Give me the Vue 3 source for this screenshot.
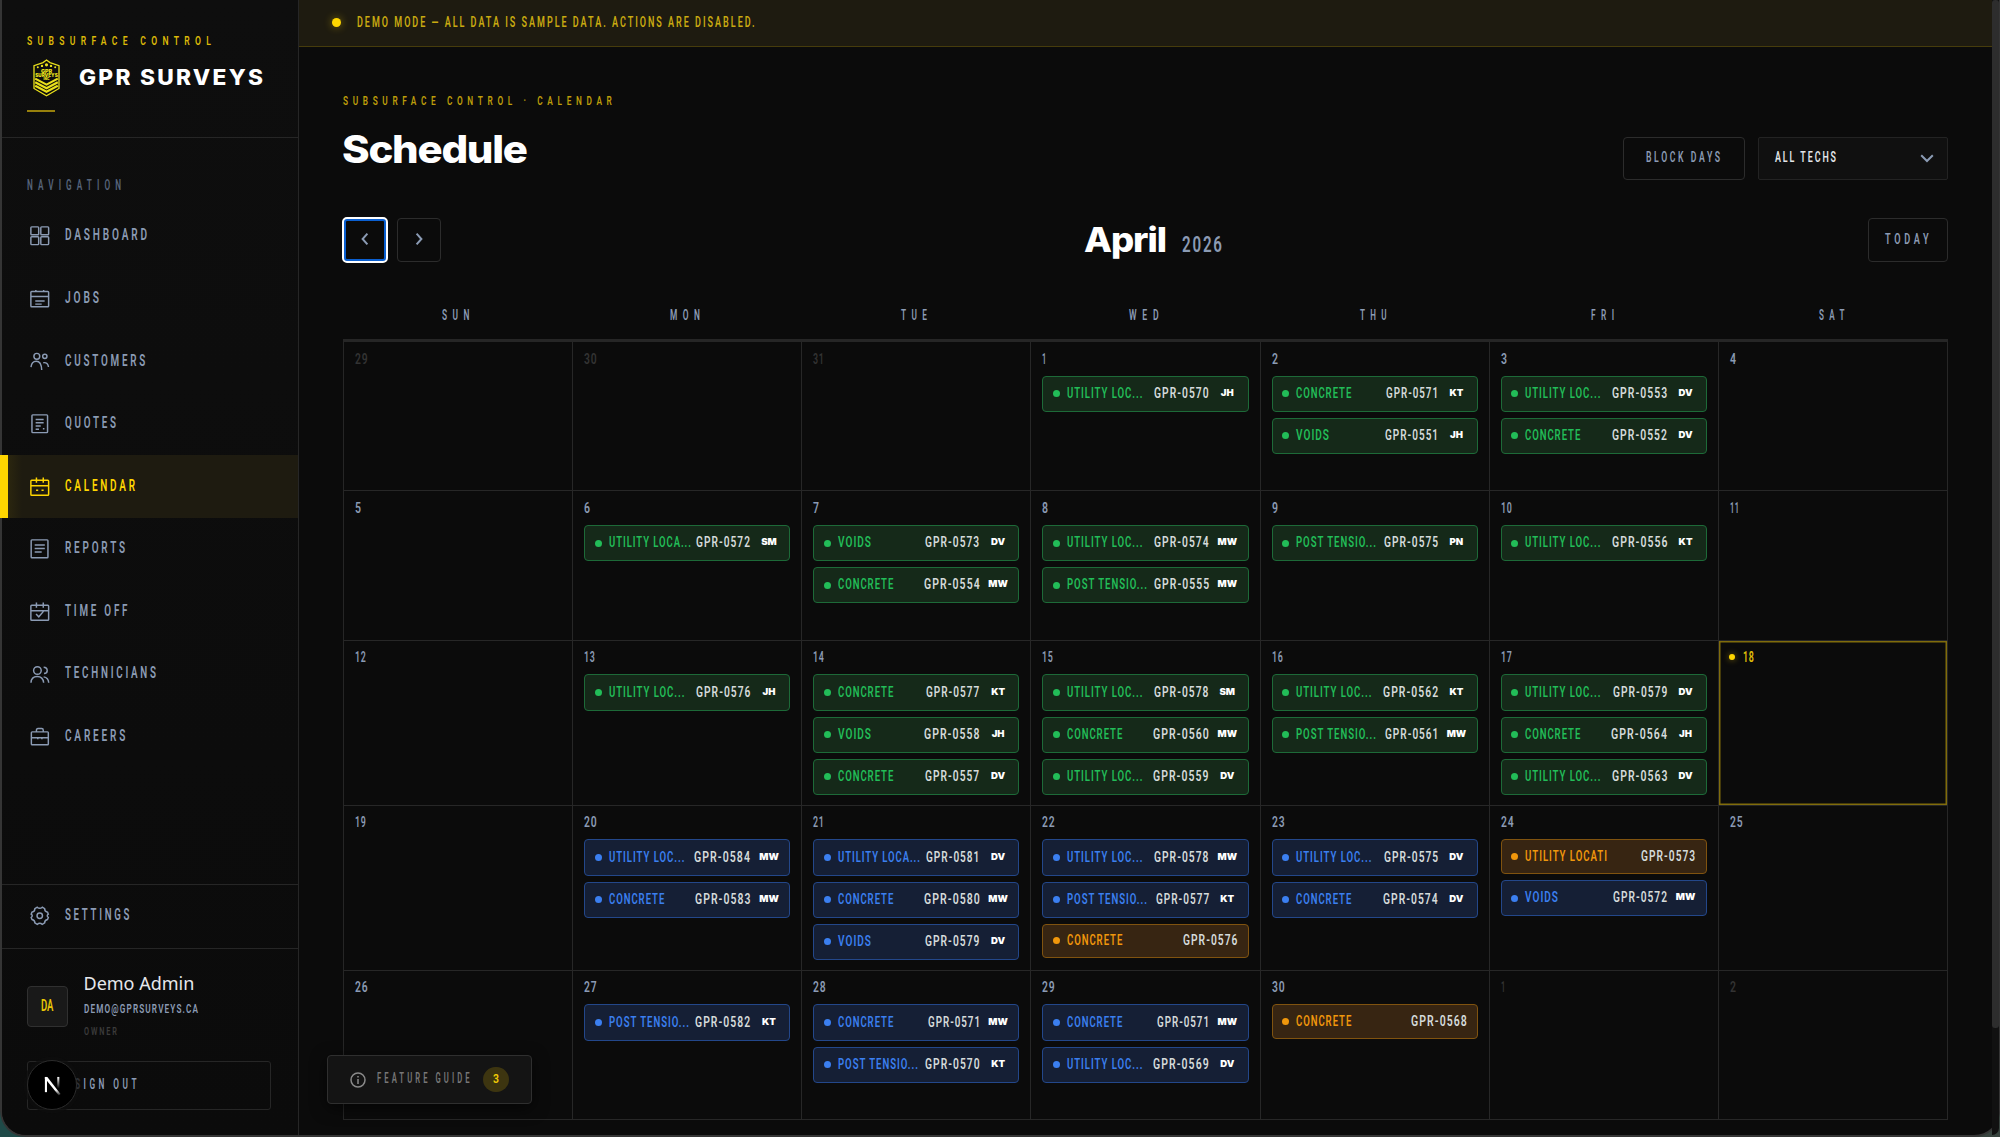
<template>
  <div class="desktop">
    <div class="window">
      <aside class="sidebar">
        <div class="brand">
          <CapText class="brand-over" text="SUBSURFACE CONTROL" :w="184" :cap="9.6" :ls="0.62" />
          <div class="brand-row">
            <svg class="logo" viewBox="0 0 27 38">
              <path d="M13.5 1 L17 3.6 L26 6.6 V29.5 L13.5 36.8 L1 29.5 V6.6 L10 3.6 Z" fill="none" stroke="currentColor" stroke-width="1.3" />
              <g fill="currentColor">
                <circle cx="4.8" cy="8.3" r="1" />
                <circle cx="9" cy="6.9" r="1.2" />
                <circle cx="13.5" cy="5.8" r="1.6" />
                <circle cx="18" cy="6.9" r="1.2" />
                <circle cx="22.2" cy="8.3" r="1" />
              </g>
              <g fill="currentColor" font-family="Inter, sans-serif" font-weight="900" text-anchor="middle">
                <text x="13.5" y="13.7" font-size="5.4">GPR</text>
                <text x="13.5" y="17.9" font-size="4.6">SURVEYS</text>
                <text x="13.5" y="21.4" font-size="3.2">INC</text>
              </g>
              <g fill="none" stroke="currentColor" stroke-width="2.2">
                <path d="M2.2 19.6 L13.5 25.6 L24.8 19.6" />
                <path d="M2.2 23.2 L13.5 29.2 L24.8 23.2" />
                <path d="M2.2 26.8 L13.5 32.8 L24.8 26.8" />
              </g>
            </svg>
            <CapText class="brand-name" text="GPR SURVEYS" :w="184" :cap="15.4" :ls="0.1" display />
          </div>
          <div class="brand-line"></div>
        </div>

        <nav class="nav">
          <CapText class="nav-title" text="NAVIGATION" :w="94" :cap="9.8" :ls="0.62" />
          <a v-for="item in navItems" :key="item.label" class="nav-item" :class="{ active: item.active }">
            <svg class="nav-icon" viewBox="0 0 20 20" v-html="item.icon"></svg>
            <CapText class="nav-label" :text="item.label" :w="item.w" :cap="11.9" :ls="0.28" />
          </a>
        </nav>

        <a class="nav-item settings">
          <svg class="nav-icon" viewBox="0 0 20 20">
            <path d="M7.4 1.2 Q10 3.6 12.6 1.2 L15 2.6 Q14.8 5.6 18 6.4 L18.8 8.4 Q16.6 10 18.8 11.8 L18 13.8 Q14.8 14.6 15 17.4 L12.6 18.8 Q10 16.6 7.4 18.8 L5 17.4 Q5.2 14.6 2 13.8 L1.2 11.8 Q3.4 10 1.2 8.4 L2 6.4 Q5.2 5.6 5 2.6 Z" />
            <circle cx="10" cy="10" r="2.8" />
          </svg>
          <CapText class="nav-label" text="SETTINGS" :w="64.3" :cap="11.9" :ls="0.28" />
        </a>

        <div class="account">
          <div class="user">
            <div class="avatar"><CapText text="DA" :w="12.5" :cap="11.2" :ls="0" /></div>
            <div class="user-text">
              <div class="user-name">Demo Admin</div>
              <CapText class="user-mail" text="DEMO@GPRSURVEYS.CA" :w="114" :cap="9.2" :ls="0.14" />
              <CapText class="user-role" text="OWNER" :w="33" :cap="7.6" :ls="0.26" />
            </div>
          </div>
          <button class="sign-out"><CapText text="SIGN OUT" :w="61.5" :cap="10.5" :ls="0.42" /></button>
        </div>
      </aside>

      <main class="main">
        <div class="banner">
          <span class="banner-dot"></span>
          <CapText text="DEMO MODE — ALL DATA IS SAMPLE DATA. ACTIONS ARE DISABLED." :w="397.5" :cap="10.3" :ls="0.22" />
        </div>

        <div class="content">
          <CapText class="crumb" text="SUBSURFACE CONTROL · CALENDAR" :w="269" :cap="9.6" :ls="0.56" />
          <div class="page-head">
            <CapText class="page-title" text="Schedule" :w="186" :cap="28" :ls="-0.03" display />
            <div class="page-actions">
              <button class="btn block-btn"><CapText text="BLOCK DAYS" :w="74" :cap="10.3" :ls="0.3" /></button>
              <div class="select">
                <CapText text="ALL TECHS" :w="61" :cap="10.3" :ls="0.22" />
                <svg class="select-arrow" viewBox="0 0 14 9"><path d="M1.2 1.2 L7 7 L12.8 1.2" /></svg>
              </div>
            </div>
          </div>

          <div class="month-bar">
            <div class="arrows">
              <button class="btn arrow focused"><svg viewBox="0 0 8 14"><path d="M6.4 1.6 L1.6 7 L6.4 12.4" /></svg></button>
              <button class="btn arrow"><svg viewBox="0 0 8 14"><path d="M1.6 1.6 L6.4 7 L1.6 12.4" /></svg></button>
            </div>
            <div class="month">
              <CapText class="month-name" text="April" :w="83" :cap="24.6" :ls="-0.03" display />
              <CapText class="month-year" text="2026" :w="40" :cap="15.8" :ls="0.12" />
            </div>
            <button class="btn today-btn"><CapText text="TODAY" :w="43.5" :cap="10.8" :ls="0.4" /></button>
          </div>

          <div class="weekdays">
            <div v-for="d in weekdays" :key="d.label" class="weekday">
              <CapText :text="d.label" :w="d.w" :cap="10.1" :ls="0.66" />
            </div>
          </div>

          <div class="grid">
            <div v-for="(day, i) in days" :key="i" class="cell" :class="{ today: day.today, outside: day.outside }">
              <div class="day-num">
                <span v-if="day.today" class="today-dot"></span>
                <CapText :text="String(day.n)" :w="numberWidth(day.n)" :cap="10.8" :ls="0.08" />
              </div>
              <div v-for="(ev, j) in day.events" :key="j" class="event" :class="ev.status">
                <span class="event-dot"></span>
                <CapText class="event-type" :text="ev.type" :w="typeWidths[ev.type]" :cap="11" :ls="0.1" />
                <CapText class="event-code" :text="'GPR-' + ev.code" :w="codeWidth(ev.code)" :cap="11" :ls="0.1" />
                <span v-if="ev.tech" class="event-tech">{{ ev.tech }}</span>
              </div>
            </div>
          </div>
        </div>
      </main>

      <div class="scrollbar"><div class="thumb"></div></div>
    </div>

    <div class="guide">
      <svg class="guide-icon" viewBox="0 0 16 16">
        <circle cx="8" cy="8" r="7" />
        <path d="M8 7 V12 M8 4 V5.4" />
      </svg>
      <CapText text="FEATURE GUIDE" :w="92.5" :cap="10.1" :ls="0.4" />
      <span class="guide-count"><CapText text="3" :w="6" :cap="9.4" :ls="0" /></span>
    </div>

    <div class="dev-badge">
      <svg viewBox="0 0 20 22">
        <defs>
          <linearGradient id="nDiag" x1="0" y1="0" x2="0" y2="1">
            <stop offset="0.7" stop-color="#fff" />
            <stop offset="1" stop-color="#fff" stop-opacity="0.1" />
          </linearGradient>
          <linearGradient id="nBar" x1="0" y1="0" x2="0" y2="1">
            <stop offset="0" stop-color="#fff" />
            <stop offset="1" stop-color="#fff" stop-opacity="0" />
          </linearGradient>
        </defs>
        <rect x="2" y="2" width="2.2" height="16" fill="#fff" />
        <path d="M2 2 H4.6 L18.4 20 L16.6 21.4 L2 3.4 Z" fill="url(#nDiag)" />
        <rect x="15" y="2" width="2.2" height="12" fill="url(#nBar)" />
      </svg>
    </div>
  </div>
</template>

<script setup>
import { h } from 'vue';

// Condensed caps label: squeezes the text so its box is exactly w x cap height
const CapText = (props) => {
  const size = props.cap / (props.display ? 0.727 : 0.711);
  const spacing = props.ls * size;
  const squeeze = (vnode) => {
    const natural = vnode.el.getComputedTextLength() - spacing;
    vnode.el.setAttribute('transform', `scale(${props.w / natural} 1)`);
  };
  return h(
    'svg',
    { class: ['cap', { display: props.display }], width: props.w, height: props.cap },
    [
      h(
        'text',
        {
          x: 0,
          y: props.cap,
          'font-size': size,
          'letter-spacing': spacing,
          onVnodeMounted: squeeze,
        },
        props.text
      ),
    ]
  );
};
CapText.props = {
  text: String,
  w: Number,
  cap: Number,
  ls: Number,
  display: Boolean,
};

const navItems = [
  {
    label: 'DASHBOARD',
    w: 82,
    icon: '<rect x="0.9" y="0.9" width="8" height="8" rx="0.8"/><rect x="11.1" y="0.9" width="8" height="8" rx="0.8"/><rect x="0.9" y="11.1" width="8" height="8" rx="0.8"/><rect x="11.1" y="11.1" width="8" height="8" rx="0.8"/>',
  },
  {
    label: 'JOBS',
    w: 34,
    icon: '<rect x="0.9" y="2.6" width="18.2" height="15.6" rx="0.8"/><path d="M1 7.8 H19 M6 0.9 V2.6 M14 0.9 V2.6 M5.4 12.4 H15 M5.4 15.5 H12"/>',
  },
  {
    label: 'CUSTOMERS',
    w: 80.3,
    icon: '<circle cx="7" cy="4.4" r="3"/><circle cx="15.2" cy="4.4" r="2.2"/><path d="M1 15.5 C1.4 11.6 3.4 9.4 6.4 9.4 C10 9.4 11.8 12.4 12 18.4 M13.6 11 C17 10.4 18.6 12.4 19 15.4"/>',
  },
  {
    label: 'QUOTES',
    w: 51,
    icon: '<rect x="2" y="0.9" width="16" height="18.2" rx="0.8"/><path d="M5.8 5.6 H14 M5.8 9 H14 M5.8 12.4 H11 M5.8 15.6 H9.2 M13.2 15.2 H14.8"/>',
  },
  {
    label: 'CALENDAR',
    w: 70,
    active: true,
    icon: '<rect x="0.9" y="3.4" width="18.2" height="15.4" rx="0.8"/><path d="M1 9 H19 M6.6 0.4 V6 M13.6 0.4 V6 M6.2 13.6 H8.4 M11.8 13.6 H14"/>',
  },
  {
    label: 'REPORTS',
    w: 60,
    icon: '<rect x="1.2" y="0.9" width="17.2" height="18.4" rx="0.8"/><path d="M4.8 6.2 H15.2 M4.8 9.8 H15.2 M4.8 13.4 H12"/>',
  },
  {
    label: 'TIME OFF',
    w: 62.5,
    icon: '<rect x="0.9" y="3.4" width="18.2" height="15.4" rx="0.8"/><path d="M1 9 H19 M6.6 0.4 V6 M13.6 0.4 V6 M6.2 12.4 L9 15.2 L13.8 9.6"/>',
  },
  {
    label: 'TECHNICIANS',
    w: 91,
    icon: '<circle cx="7.6" cy="5.6" r="3.9"/><path d="M1 18.2 C1.2 13.8 4 11.8 7.4 11.8 C11 11.8 13.6 13.8 14 18.2 M14 2.4 C18.8 2.6 18.8 8.6 14.4 8.8 M14 12.2 C17.4 12.8 19 14.8 19.2 18.2"/>',
  },
  {
    label: 'CAREERS',
    w: 60.3,
    icon: '<rect x="1.4" y="5" width="17.4" height="13.2" rx="0.8"/><path d="M6.6 5 V3.4 Q6.6 1.6 8.2 1.6 H12 Q13.6 1.6 13.6 3.4 V5 M1.6 11 H18.6 M8 11 V12.6 M12.2 11 V12.6"/>',
  },
];

const weekdays = [
  { label: 'SUN', w: 27.5 },
  { label: 'MON', w: 30 },
  { label: 'TUE', w: 26 },
  { label: 'WED', w: 29.5 },
  { label: 'THU', w: 26.5 },
  { label: 'FRI', w: 23 },
  { label: 'SAT', w: 25.5 },
];

const U = 'UTILITY LOC...';
const UA = 'UTILITY LOCA...';
const P = 'POST TENSIO...';
const C = 'CONCRETE';
const V = 'VOIDS';

const typeWidths = {
  [U]: 75.5,
  [UA]: 82,
  [P]: 80,
  [C]: 55.3,
  [V]: 33,
  'UTILITY LOCATI': 82,
};

const done = (type, code, tech) => ({ status: 'done', type, code, tech });
const booked = (type, code, tech) => ({ status: 'booked', type, code, tech });
const pending = (type, code) => ({ status: 'pending', type, code });

const schedule = {
  1: [done(U, '0570', 'JH')],
  2: [done(C, '0571', 'KT'), done(V, '0551', 'JH')],
  3: [done(U, '0553', 'DV'), done(C, '0552', 'DV')],
  6: [done(UA, '0572', 'SM')],
  7: [done(V, '0573', 'DV'), done(C, '0554', 'MW')],
  8: [done(U, '0574', 'MW'), done(P, '0555', 'MW')],
  9: [done(P, '0575', 'PN')],
  10: [done(U, '0556', 'KT')],
  13: [done(U, '0576', 'JH')],
  14: [done(C, '0577', 'KT'), done(V, '0558', 'JH'), done(C, '0557', 'DV')],
  15: [done(U, '0578', 'SM'), done(C, '0560', 'MW'), done(U, '0559', 'DV')],
  16: [done(U, '0562', 'KT'), done(P, '0561', 'MW')],
  17: [done(U, '0579', 'DV'), done(C, '0564', 'JH'), done(U, '0563', 'DV')],
  20: [booked(U, '0584', 'MW'), booked(C, '0583', 'MW')],
  21: [booked(UA, '0581', 'DV'), booked(C, '0580', 'MW'), booked(V, '0579', 'DV')],
  22: [booked(U, '0578', 'MW'), booked(P, '0577', 'KT'), pending(C, '0576')],
  23: [booked(U, '0575', 'DV'), booked(C, '0574', 'DV')],
  24: [pending('UTILITY LOCATI', '0573'), booked(V, '0572', 'MW')],
  27: [booked(P, '0582', 'KT')],
  28: [booked(C, '0571', 'MW'), booked(P, '0570', 'KT')],
  29: [booked(C, '0571', 'MW'), booked(U, '0569', 'DV')],
  30: [pending(C, '0568')],
};

const days = [
  ...[29, 30, 31].map((n) => ({ n, outside: true, events: [] })),
  ...Array.from({ length: 30 }, (_, i) => ({
    n: i + 1,
    today: i + 1 === 18,
    events: schedule[i + 1] || [],
  })),
  ...[1, 2].map((n) => ({ n, outside: true, events: [] })),
];

const digitWidths = { 0: 7.6, 1: 5.1, 2: 7, 3: 7.2, 4: 7.7, 5: 7.2, 6: 7.5, 7: 6.2, 8: 7.5, 9: 7.4 };
const codeWidth = (code) => 40.8 + digitWidths[code[2]] + digitWidths[code[3]];

const numberWidth = (n) => {
  const total = [...String(n)].reduce((sum, d) => sum + (d === '1' ? 4.8 : 6.6), 0);
  return total - 0.6;
};
</script>

<style>
html,
body {
  background: #0b0b0b;
  overflow: hidden;
}

.cap {
  display: block;
  flex: none;
  overflow: visible;
  font-family: Roboto, 'Liberation Sans', sans-serif;
  font-weight: 600;
  fill: currentColor;
}

.cap.display {
  font-family: Inter, 'Open Sans', sans-serif;
  font-weight: 800;
}
</style>

<style scoped>
* {
  box-sizing: border-box;
}

.desktop {
  position: relative;
  width: 2000px;
  height: 1137px;
  overflow: hidden;
  background: linear-gradient(90deg, #1f4a48, #24413d 50%, #38443f);
  color: #8b9bb4;
}

.window {
  display: flex;
  width: 2000px;
  height: 1137px;
  background: #0b0b0b;
  border: solid #353535;
  border-width: 0 1px 2px 2px;
  border-radius: 0 0 26px 26px;
}

button {
  margin: 0;
  padding: 0;
  background: none;
  color: inherit;
  font: inherit;
}

/* sidebar */
.sidebar {
  display: flex;
  flex-direction: column;
  width: 297px;
  flex: none;
  background: linear-gradient(#0e0e0e, #0b0b0b);
  border-right: 1px solid #262626;
  border-bottom-left-radius: 24px;
}

.brand {
  height: 137.5px;
  padding: 35px 0 0 25px;
  border-bottom: 1px solid #262626;
}

.brand-over {
  color: #dcb908;
}

.brand-row {
  display: flex;
  align-items: center;
  margin-top: 14.2px;
  padding-left: 5.5px;
}

.logo {
  width: 27px;
  height: 38px;
  color: #e9e01b;
}

.brand-name {
  margin-left: 19px;
  color: #fff;
}

.brand-line {
  width: 27.5px;
  height: 2px;
  margin-top: 13px;
  background: #97800c;
}

.nav {
  flex: 1;
  padding-top: 42.2px;
}

.nav-title {
  margin: 0 0 15.4px 25px;
  color: #56647a;
}

.nav-item {
  display: flex;
  align-items: center;
  height: 62.6px;
  padding-left: 27.8px;
}

.nav-icon {
  width: 19.5px;
  height: 19.5px;
  margin-right: 15.8px;
  overflow: visible;
  fill: none;
  stroke: currentColor;
  stroke-width: 1.5;
}

.nav-label {
  margin-bottom: 3.8px;
}

.nav-item.active {
  margin-left: -2px;
  padding-left: 21.8px;
  border-left: 8px solid #ffd600;
  background: linear-gradient(90deg, #2b260f, #1e1b10 14px);
  color: #ffd600;
}

.settings {
  height: 64px;
  padding-bottom: 1.5px;
  border-top: 1px solid #262626;
}

.account {
  height: 187.3px;
  padding: 28.5px 27px 0 25px;
  border-top: 1px solid #262626;
}

.user {
  display: flex;
  height: 84px;
}

.avatar {
  display: flex;
  align-items: center;
  justify-content: center;
  width: 41px;
  height: 41px;
  margin-top: 8.5px;
  padding-bottom: 2px;
  background: #191919;
  border: 1px solid #303030;
  border-radius: 4px;
  color: #e8c505;
}

.user-text {
  margin-left: 15.5px;
}

.user-name {
  margin-top: -7px;
  color: #e6e8ec;
  font: 18px/27px 'Noto Sans', sans-serif;
  white-space: nowrap;
}

.user-mail {
  margin-top: 6.5px;
}

.user-role {
  margin-top: 14.2px;
  color: #3b3b3b;
}

.sign-out {
  display: flex;
  align-items: center;
  width: 244px;
  height: 48.5px;
  padding: 0 0 4px 47px;
  border: 1px solid #262626;
  border-radius: 3px;
}

/* main area */
.main {
  flex: 1;
  min-width: 0;
}

.banner {
  display: flex;
  align-items: center;
  height: 47px;
  padding: 0 0 2px 32.5px;
  background: #1e1b10;
  border-bottom: 1px solid #463c0c;
  color: #c9aa10;
}

.banner-dot {
  width: 9px;
  height: 9px;
  margin: 1px 16px 0 0;
  border-radius: 50%;
  background: #ffd600;
  box-shadow: 0 0 8px rgba(255, 214, 0, 0.45);
}

.content {
  padding: 48px 44px 0 44px;
}

.crumb {
  margin-left: -0.5px;
  color: #bd9d0a;
}

.page-head {
  display: flex;
  justify-content: space-between;
  height: 113.4px;
}

.page-title {
  margin: 30.7px 0 0 -1px;
  color: #fff;
}

.page-actions {
  display: flex;
  gap: 13.5px;
  margin-top: 32.2px;
}

.btn {
  display: flex;
  align-items: center;
  justify-content: center;
  height: 44px;
  padding-bottom: 1px;
  border: 1px solid #2c2c2c;
  border-radius: 4px;
}

.block-btn {
  width: 121.5px;
  height: 43px;
  padding-right: 1px;
  padding-bottom: 3px;
}

.select {
  display: flex;
  align-items: center;
  justify-content: space-between;
  width: 190px;
  height: 43px;
  padding: 0 13px 3px 16px;
  background: #101010;
  border: 1px solid #232323;
  border-radius: 2px;
  color: #e3e5e9;
}

.select-arrow {
  width: 14px;
  height: 9px;
  margin-top: 3px;
  fill: none;
  stroke: #8b9bb4;
  stroke-width: 2;
}

.month-bar {
  display: flex;
  align-items: flex-start;
  justify-content: space-between;
  height: 92.3px;
}

.arrows {
  display: flex;
  gap: 10.2px;
  width: 99px;
}

.arrow {
  width: 44px;
}

.arrow svg {
  width: 8px;
  height: 14px;
  fill: none;
  stroke: #8b9bb4;
  stroke-width: 2;
}

.arrow.focused {
  border: 3px solid #0a5fd0;
  outline: 2px solid #fff;
  outline-offset: -1px;
}

.month {
  display: flex;
  align-items: flex-end;
  height: 33.5px;
  margin-left: -4px;
}

.month-name {
  margin-right: 14.5px;
  color: #fff;
}

.today-btn {
  width: 80px;
  padding-right: 2px;
  padding-bottom: 3px;
}

.weekdays {
  display: grid;
  grid-template-columns: repeat(7, 1fr);
  height: 28.8px;
}

.weekday {
  display: flex;
  justify-content: center;
  padding-right: 4px;
}

.grid {
  display: grid;
  grid-template-columns: repeat(7, 1fr);
  grid-template-rows: 149.4px 149.4px 165px 165px 149.6px;
  border-top: 3px solid #262626;
  border-left: 1px solid #262626;
}

.cell {
  min-width: 0;
  padding: 10.6px 11px 0 11px;
  border-right: 1px solid #272727;
  border-bottom: 1px solid #272727;
}

.cell.outside {
  color: #333;
}

.cell.today {
  box-shadow: inset 0 0 0 1.5px #806c0c;
  color: #e2c007;
}

.day-num {
  display: flex;
  align-items: center;
  height: 10.8px;
  margin-bottom: 12.2px;
}

.today-dot {
  width: 6px;
  height: 6px;
  margin: 1px 7.5px 0 -0.5px;
  border-radius: 50%;
  background: #ffd600;
  box-shadow: 0 0 6px rgba(255, 214, 0, 0.5);
}

.event {
  display: flex;
  align-items: center;
  height: 36.3px;
  margin-bottom: 5.8px;
  padding: 0 10.3px 0 9.5px;
  border: 1px solid;
  border-radius: 4px;
}

.event-dot {
  width: 7px;
  height: 7px;
  border-radius: 50%;
  background: currentColor;
}

.event-type {
  margin: 0 0 2.6px 7px;
}

.event-code {
  margin: 0 0 2.6px auto;
  color: #d5dbdb;
}

.event-tech {
  width: 20px;
  margin: 0 0 2px 8.5px;
  color: #fff;
  font: 900 9.6px/12px Inter, sans-serif;
  text-align: center;
}

.event.done {
  background: #152919;
  border-color: #1d6a38;
  color: #22bd58;
}

.event.booked {
  background: #151f35;
  border-color: #23478a;
  color: #3b7ff0;
}

.event.pending {
  height: 34.7px;
  background: #372512;
  border-color: #80530f;
  color: #f0970c;
}

.scrollbar {
  width: 7px;
  flex: none;
  background: #111;
  border-bottom-right-radius: 24px;
}

.thumb {
  height: 1028px;
  border-radius: 3px;
  background: #2d2d2d;
}

/* overlays */
.guide {
  position: absolute;
  left: 327px;
  top: 1055px;
  display: flex;
  align-items: center;
  width: 205px;
  height: 49px;
  padding-left: 22px;
  background: #141414;
  border: 1px solid #2f2f2f;
  border-radius: 4px;
  box-shadow: 0 4px 16px rgba(0, 0, 0, 0.6);
  color: #777;
}

.guide > .cap {
  margin: 0 13.5px 3px 11px;
}

.guide-icon {
  width: 16px;
  height: 16px;
  fill: none;
  stroke: #8a8a8a;
  stroke-width: 1.5;
}

.guide-count {
  display: flex;
  align-items: center;
  justify-content: center;
  width: 25.5px;
  height: 25.5px;
  padding-bottom: 2px;
  border-radius: 50%;
  background: #3d3510;
  color: #f2cd05;
}

.dev-badge {
  position: absolute;
  left: 27px;
  top: 1060px;
  display: flex;
  align-items: center;
  justify-content: center;
  width: 50px;
  height: 50px;
  border: 1.5px solid #2b2b2b;
  border-radius: 50%;
  background: #000;
  box-shadow: 0 0 0 3.5px rgba(14, 14, 14, 0.75);
}

.dev-badge svg {
  width: 19px;
  height: 21px;
}
</style>
